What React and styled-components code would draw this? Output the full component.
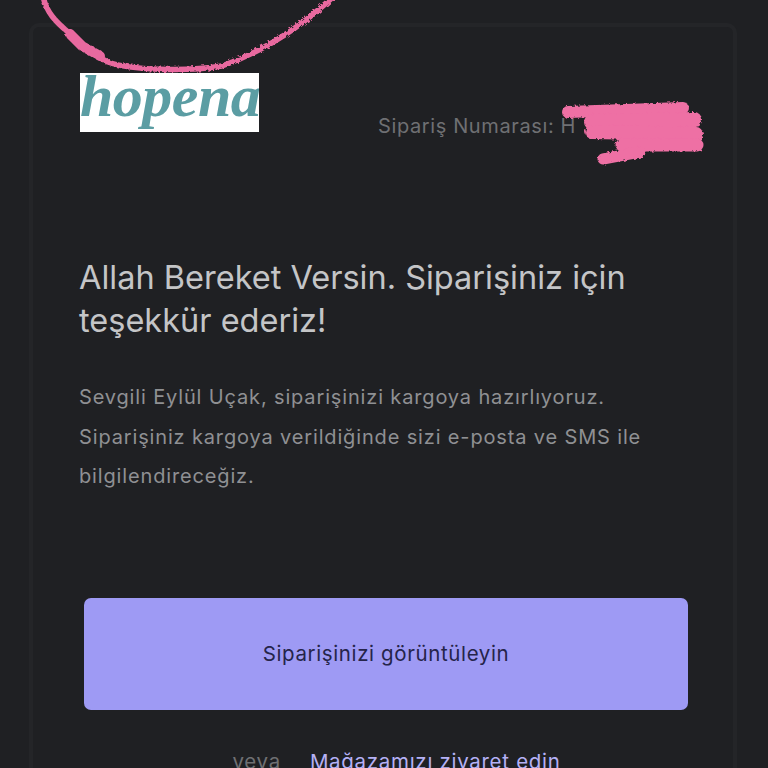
import styled, { createGlobalStyle } from "styled-components";

const GlobalStyle = createGlobalStyle`
  html, body {
    margin: 0;
    padding: 0;
    background: #1f2023;
  }
`;

const Page = styled.div`
  position: relative;
  width: 768px;
  height: 768px;
  overflow: hidden;
  background: #1f2023;
  font-family: Inter, "Liberation Sans", sans-serif;
  padding: 23px 31px 0 29px;
  box-sizing: border-box;
`;

const Card = styled.div`
  border: 4px solid #242528;
  border-bottom: 0;
  border-radius: 10px 10px 0 0;
  height: 745px;
  padding: 46px 43px 0 47px;
  box-sizing: border-box;
`;

const Header = styled.div`
  display: flex;
  align-items: flex-start;
  gap: 119px;
`;

const Logo = styled.div`
  width: 179px;
  height: 59px;
  flex: none;
  background: #fff;
  overflow: hidden;
  color: #5b9da3;
  font-family: "Liberation Serif", serif;
  font-style: italic;
  font-weight: 700;
  font-size: 60px;
  line-height: 46px;
  letter-spacing: -0.5px;
  white-space: nowrap;
`;

const OrderNumber = styled.div`
  margin-top: 40px;
  color: #6f7073;
  font-size: 20px;
  line-height: 26px;
  letter-spacing: 0.62px;
  white-space: nowrap;
`;

const Heading = styled.h1`
  margin: 117px 0 0 -1px;
  color: #c4c5c7;
  font-size: 32.5px;
  font-weight: 400;
  line-height: 43px;
`;

const Message = styled.p`
  margin: 36px 0 0 -1px;
  width: 600px;
  color: #8f9093;
  font-size: 20px;
  line-height: 39.5px;
  letter-spacing: 0.85px;
`;

const Button = styled.a`
  display: flex;
  align-items: center;
  justify-content: center;
  width: 604px;
  height: 112px;
  margin: 101px 0 0 4px;
  border-radius: 7px;
  background: #9e9af4;
  color: #25244a;
  font-size: 20.5px;
  letter-spacing: 0.62px;
`;

const Footer = styled.div`
  display: flex;
  justify-content: center;
  gap: 29px;
  width: 633px;
  height: 30px;
  margin-top: 39px;
  font-size: 20.5px;
  line-height: 26px;
  letter-spacing: 0.7px;
`;

const Muted = styled.span`
  color: #6f7073;
`;

const StoreLink = styled.a`
  color: #b5b1f6;
`;

const Scribble = styled.svg`
  position: absolute;
  inset: 0;
  pointer-events: none;
`;

const App = () => {
  return (
    <Page>
      <GlobalStyle />
      <Card>
        <Header>
          <Logo>hopena</Logo>
          <OrderNumber>Sipariş Numarası: H</OrderNumber>
        </Header>
        <Heading>
          Allah Bereket Versin. Siparişiniz için
          <br />
          teşekkür ederiz!
        </Heading>
        <Message>
          Sevgili Eylül Uçak, siparişinizi kargoya hazırlıyoruz. Siparişiniz
          kargoya verildiğinde sizi e-posta ve SMS ile bilgilendireceğiz.
        </Message>
        <Button>Siparişinizi görüntüleyin</Button>
        <Footer>
          <Muted>veya</Muted>
          <StoreLink>Mağazamızı ziyaret edin</StoreLink>
        </Footer>
      </Card>
      <Scribble width="768" height="768" viewBox="0 0 768 768">
        <defs>
          <filter id="chalk" x="-5%" y="-5%" width="110%" height="110%">
            <feTurbulence type="fractalNoise" baseFrequency="0.35" numOctaves="2" seed="4" />
            <feDisplacementMap in="SourceGraphic" scale="4" />
          </filter>
        </defs>
        <g filter="url(#chalk)" fill="none" stroke="#e8699f" strokeLinecap="round" strokeLinejoin="round">
          <path
            d="M43 -4 C46 12 56 22 68 32 C78 46 92 54 108 62 C130 70 185 72 222 66 C262 52 300 28 334 -4"
            strokeWidth="5.5"
          />
          <path d="M70 34 L82 46 L100 56" strokeWidth="10" />
          <g stroke="#ee6fa4">
            <path d="M568 112 L683 108" strokeWidth="12" />
            <path d="M592 122 L694 120" strokeWidth="16" />
            <path d="M592 132 L696 134" strokeWidth="14" />
            <path d="M622 145 L697 145" strokeWidth="13" />
            <path d="M603 159 L640 152" strokeWidth="11" />
          </g>
        </g>
      </Scribble>
    </Page>
  );
};

export default App;
